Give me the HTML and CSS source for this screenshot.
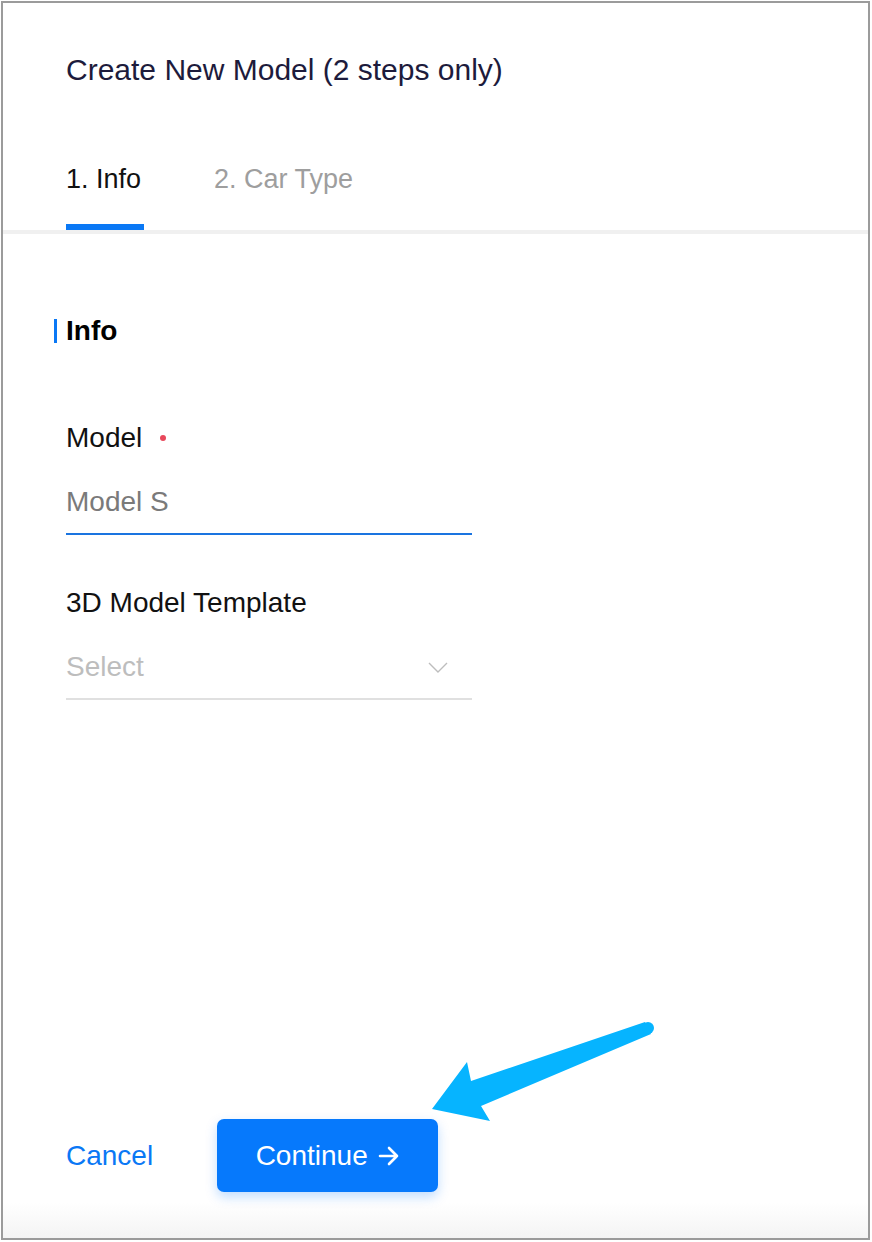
FILE: index.html
```html
<!DOCTYPE html>
<html lang="en">
<head>
<meta charset="utf-8">
<title>Create New Model</title>
<link rel="stylesheet" href="styles.css">
</head>
<body>
<div class="frame">
  <div class="header">
    <h1 class="title">Create New Model (2 steps only)</h1>
  </div>
  <div class="tabs">
    <div class="tab active">1. Info</div>
    <div class="tab">2. Car Type</div>
  </div>
  <div class="content">
    <h2 class="section">Info</h2>
    <div class="field">
      <div class="label">Model <span class="req"></span></div>
      <div class="input focused">Model S</div>
    </div>
    <div class="field">
      <div class="label">3D Model Template</div>
      <div class="input select">
        <span class="placeholder">Select</span>
        <svg class="chevron" width="20" height="11" viewBox="0 0 20 11"><path d="M1 1 L10 10 L19 1" fill="none" stroke="#bdbdbd" stroke-width="1.4"/></svg>
      </div>
    </div>
  </div>
  <div class="footer">
    <a class="cancel">Cancel</a>
    <button class="continue">Continue <svg class="arr" width="22" height="20" viewBox="0 0 22 20"><path d="M2 10 H19 M11 2 L19 10 L11 18" fill="none" stroke="#fff" stroke-width="2.6" stroke-linecap="round" stroke-linejoin="round"/></svg></button>
  </div>
</div>
<svg class="pointer" width="872" height="1242" viewBox="0 0 872 1242">
  <polygon points="432,1109 467,1062 471,1081 645,1022 651,1034 481,1106 490,1121" fill="#06b4ff"/>
  <circle cx="648" cy="1028" r="6" fill="#06b4ff"/>
</svg>
</body>
</html>
```
FILE: styles.css
```css
html, body {
  margin: 0;
  padding: 0;
  background: #ffffff;
}
body {
  font-family: "Liberation Sans", Arial, Helvetica, sans-serif;
  width: 872px;
  height: 1242px;
  overflow: hidden;
}
.frame {
  margin: 1px 2px 2px 1px;
  border: 2px solid #9b9b9b;
  height: 1235px;
  box-sizing: content-box;
  display: flex;
  flex-direction: column;
  background: #fff;
}
.header {
  padding: 51px 0 0 63px;
}
.title {
  margin: 0;
  font-size: 30px;
  line-height: 32px;
  font-weight: 400;
  color: #1d1b3c;
}
.tabs {
  display: flex;
  gap: 70px;
  padding: 78px 0 0 63px;
  border-bottom: 4px solid #f0f0f0;
}
.tab {
  font-size: 27px;
  line-height: 30px;
  color: #9e9e9e;
  padding-bottom: 30px;
  border-bottom: 6px solid transparent;
}
.tab.active {
  color: #111;
  width: 78px;
  border-bottom-color: #0a78f5;
}
.content {
  padding: 85px 0 0 63px;
}
.section {
  margin: 0 0 0 -12px;
  padding-left: 9px;
  border-left: 3px solid #0a78f5;
  font-size: 28px;
  line-height: 24px;
  font-weight: 700;
  color: #000;
}
.field {
  width: 406px;
  margin-top: 80px;
}
.field + .field {
  margin-top: 53px;
}
.label {
  font-size: 28px;
  line-height: 30px;
  color: #111;
  display: flex;
  align-items: center;
}
.req {
  display: inline-block;
  width: 6px;
  height: 6px;
  border-radius: 50%;
  background: #e8485b;
  margin-left: 18px;
}
.input {
  margin-top: 34px;
  font-size: 28px;
  line-height: 30px;
  padding-bottom: 16px;
  border-bottom: 2px solid #e0e0e0;
  color: #7a7a7a;
  display: flex;
  align-items: center;
  justify-content: space-between;
}
.input.focused {
  border-bottom-color: #1a74e0;
}
.placeholder {
  color: #bdbdbd;
}
.chevron {
  margin-right: 24px;
}
.footer {
  margin-top: auto;
  display: flex;
  align-items: center;
  gap: 64px;
  padding: 0 0 46px 63px;
  background: linear-gradient(to bottom, #ffffff 0%, #ffffff 70%, #f4f4f4 100%);
}
.cancel {
  font-size: 28px;
  color: #0a78f5;
  cursor: pointer;
}
.continue {
  width: 221px;
  height: 73px;
  border: none;
  border-radius: 7px;
  background: #0679fc;
  color: #fff;
  font-family: "Liberation Sans", Arial, Helvetica, sans-serif;
  font-size: 28px;
  box-shadow: 0 5px 12px rgba(6, 121, 252, 0.25);
  cursor: pointer;
  display: flex;
  align-items: center;
  justify-content: center;
  gap: 10px;
  padding: 0 0 0 0;
}
.arr {
  display: block;
}
.pointer {
  position: absolute;
  left: 0;
  top: 0;
  pointer-events: none;
}
```
